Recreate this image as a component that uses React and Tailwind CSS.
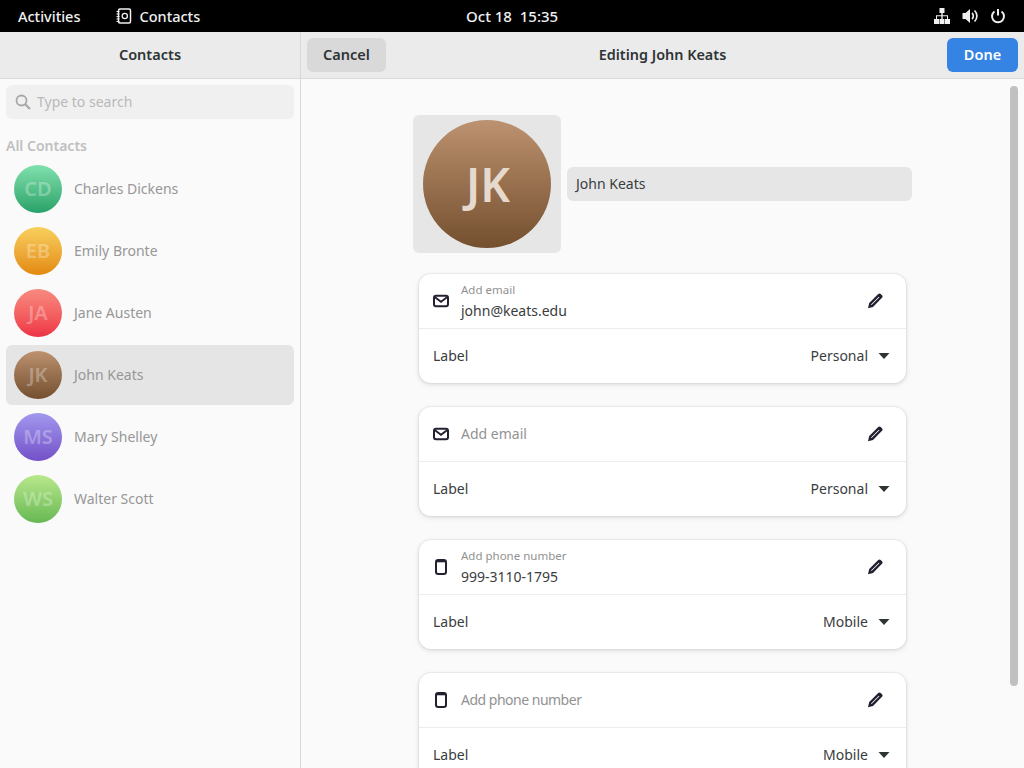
import React from 'react';

const contacts = [
  { initials: 'CD', name: 'Charles Dickens', grad: 'bg-gradient-to-b from-[#7fe0ae] to-[#26a269]' },
  { initials: 'EB', name: 'Emily Bronte', grad: 'bg-gradient-to-b from-[#f8d05c] to-[#e28a08]' },
  { initials: 'JA', name: 'Jane Austen', grad: 'bg-gradient-to-b from-[#f78a80] to-[#ed2f45]' },
  { initials: 'JK', name: 'John Keats', grad: 'bg-gradient-to-b from-[#bd9270] to-[#74502f]', selected: true },
  { initials: 'MS', name: 'Mary Shelley', grad: 'bg-gradient-to-b from-[#a298ee] to-[#7450c8]' },
  { initials: 'WS', name: 'Walter Scott', grad: 'bg-gradient-to-b from-[#b8e88c] to-[#66b854]' },
];

const MailIcon = () => (
  <svg width="16" height="16" viewBox="0 0 16 16" fill="none" stroke="#241f31">
    <rect x="1" y="2.8" width="14" height="10.4" rx="2" strokeWidth="2" />
    <path d="M2 4.2l6 4.6 6-4.6" strokeWidth="1.8" />
  </svg>
);

const PhoneIcon = () => (
  <svg width="16" height="16" viewBox="0 0 16 16" fill="none" stroke="#241f31">
    <rect x="3" y="1" width="10" height="14" rx="2.2" strokeWidth="2" />
    <path d="M4 2.3h8" strokeWidth="2" />
  </svg>
);

const PencilIcon = () => (
  <svg width="16" height="16" viewBox="0 0 16 16" fill="#241f31">
    <path d="M11.2 1a1.8 1.8 0 0 1 2.5 0l1.3 1.3a1.8 1.8 0 0 1 0 2.5L6 13.9 1 15.2l1.2-5.1zM11.8 3.7 4 11.5l.6.6 7.8-7.8z" fillRule="evenodd" />
  </svg>
);

const Caret = () => (
  <svg width="12" height="6" viewBox="0 0 12 6" fill="#2e3436" className="ml-[10px]">
    <path d="M0.5 0h11L6 6z" />
  </svg>
);

const Field = ({ icon, hint, value, label, tight }) => (
  <div className="bg-white rounded-xl shadow-[0_0_0_1px_rgba(0,0,0,0.03),0_1px_3px_1px_rgba(0,0,0,0.07),0_2px_6px_2px_rgba(0,0,0,0.03)] mb-6 shrink-0">
    <div className="h-[54px] flex items-center pl-[14px] pr-[23px] border-b border-[#ececec] box-content">
      {icon}
      <div className="ml-3 flex-1 min-w-0">
        {value ? (
          <div className="pt-[2px]">
            <div className="text-[11.5px] leading-[14px] text-[#929292]">{hint}</div>
            <div className="text-[14px] leading-[20px] mt-[4px] text-[#3a3d3e]">{value}</div>
          </div>
        ) : (
          <div className={`text-[14px] pb-px text-[#929292] ${tight ? 'tracking-[-0.5px]' : ''}`}>{hint}</div>
        )}
      </div>
      <PencilIcon />
    </div>
    <div className="h-[54px] flex items-center justify-between pl-[14px] pr-4 text-[14px] text-[#3a3d3e]">
      <span className="pb-px">Label</span>
      <span className="flex items-center">
        <span className="pb-px">{label}</span>
        <Caret />
      </span>
    </div>
  </div>
);

export default function App() {
  return (
    <div className="w-[1024px] h-[768px] overflow-hidden flex flex-col bg-[#fafafa] font-['Noto_Sans',sans-serif] text-[#2e3436]">
      {/* shell top bar */}
      <div className="h-8 shrink-0 bg-black text-[#f0f0f0] text-[14.5px] font-medium flex items-center px-[18px] relative">
        <span className="pt-px">Activities</span>
        <svg width="16" height="16" viewBox="0 0 16 16" className="ml-[36px] mr-[7px]" fill="none" stroke="#f0f0f0">
          <rect x="2.5" y="1" width="12" height="14" rx="1.5" strokeWidth="1.5" />
          <circle cx="8.8" cy="8" r="2.6" strokeWidth="1.3" />
          <path d="M0.5 3.5h3M0.5 6h3M0.5 8.5h3M0.5 11h3M0.5 13.5h3" strokeWidth="1" />
        </svg>
        <span className="pt-px">Contacts</span>
        <span className="absolute left-[466px] top-[6px] leading-5 text-[15px]">Oct 18&nbsp;&nbsp;15:35</span>
        <div className="ml-auto flex items-center gap-[12px]">
          <svg width="16" height="16" viewBox="0 0 16 16" fill="#f0f0f0">
            <path d="M5.5 0h5v5H8.7v2.3H14V11h2v5h-5v-5h2V8.3H8.7V11h1.8v5h-5v-5h1.8V8.3H3V11h2v5H0v-5h2V7.3h5.3V5H5.5z" />
          </svg>
          <svg width="16" height="16" viewBox="0 0 16 16" fill="#f0f0f0">
            <path d="M0.5 5H3.5L8 1v14l-4.5-4H0.5z" />
            <path d="M10 5a4 4 0 0 1 0 6M12.5 2.5a7.5 7.5 0 0 1 0 11" fill="none" stroke="#f0f0f0" strokeWidth="1.7" />
          </svg>
          <svg width="16" height="16" viewBox="0 0 16 16" fill="none" stroke="#f0f0f0" strokeWidth="2">
            <path d="M4.5 3.5a6 6 0 1 0 7 0" />
            <path d="M8 1v6.5" />
          </svg>
        </div>
      </div>

      {/* window header */}
      <div className="h-[47px] shrink-0 flex bg-[#ebebeb] border-b border-[#dbdbdb]">
        <div className="w-[301px] shrink-0 flex items-center justify-center border-r border-[#d8d8d8] text-[14.5px] font-semibold">
          Contacts
        </div>
        <div className="flex-1 grid grid-cols-[1fr_auto_1fr] items-center px-[6px]">
          <button className="w-[79px] h-[34px] rounded-md bg-[#d9d9d9] text-[14.5px] font-semibold">Cancel</button>
          <span className="text-[14.4px] font-semibold">Editing John Keats</span>
          <button className="justify-self-end w-[71px] h-[34px] rounded-md bg-[#3584e4] text-white text-[14.5px] font-semibold">Done</button>
        </div>
      </div>

      <div className="flex-1 flex min-h-0">
        {/* contact list */}
        <div className="w-[301px] shrink-0 border-r border-[#d8d8d8] px-[6px] pt-[6px]">
          <div className="h-[34px] rounded-md bg-[#f0f0f0] flex items-center pl-[9px] text-[14px] text-[#b9b9b9]">
            <svg width="16" height="16" viewBox="0 0 16 16" fill="none" stroke="#a8a8a8" strokeWidth="1.8">
              <circle cx="6.5" cy="6.5" r="5" />
              <path d="M10.2 10.2 15 15" strokeWidth="2.2" />
            </svg>
            <span className="ml-[6px] pb-px">Type to search</span>
          </div>
          <div className="mt-[17px] h-5 leading-5 text-[14px] font-semibold text-[#c0c0c0]">All Contacts</div>
          <div className="mt-[3px] flex flex-col gap-[2px]">
            {contacts.map((c) => (
              <div
                key={c.name}
                className={`h-[60px] rounded-md flex items-center pl-2 ${c.selected ? 'bg-[#e5e5e5]' : ''}`}
              >
                <div className={`w-12 h-12 rounded-full flex items-center justify-center text-[20px] font-semibold text-white/30 ${c.grad}`}>
                  {c.initials}
                </div>
                <span className="ml-3 pb-px text-[14px] text-[#979797]">{c.name}</span>
              </div>
            ))}
          </div>
        </div>

        {/* editor */}
        <div className="flex-1 relative overflow-hidden">
          <div className="w-[499px] mx-auto pt-9 flex flex-col">
            <div className="flex items-center">
              <div className="w-[148px] h-[138px] rounded-md bg-[#e6e6e6] flex items-center justify-center">
                <div className="w-32 h-32 rounded-full pl-[2px] bg-gradient-to-b from-[#bd9270] to-[#74502f] flex items-center justify-center text-[46px] font-semibold text-[#e6d9cd]">
                  JK
                </div>
              </div>
              <div className="ml-[6px] flex-1 h-[34px] rounded-md bg-[#e6e6e6] flex items-center pl-[9px] text-[14px] text-[#3a3d3e]">
                <span className="pb-px">John Keats</span>
              </div>
            </div>
            <div className="px-[6px] mt-[21px] flex flex-col">
              <Field icon={<MailIcon />} hint="Add email" value="john@keats.edu" label="Personal" />
              <Field icon={<MailIcon />} hint="Add email" label="Personal" />
              <Field icon={<PhoneIcon />} hint="Add phone number" value="999-3110-1795" label="Mobile" />
              <Field icon={<PhoneIcon />} hint="Add phone number" label="Mobile" tight />
            </div>
          </div>
          {/* overlay scrollbar */}
          <div className="absolute left-[709px] top-[7px] w-2 h-[600px] rounded-full bg-[#c0c0c0]" />
        </div>
      </div>
    </div>
  );
}
